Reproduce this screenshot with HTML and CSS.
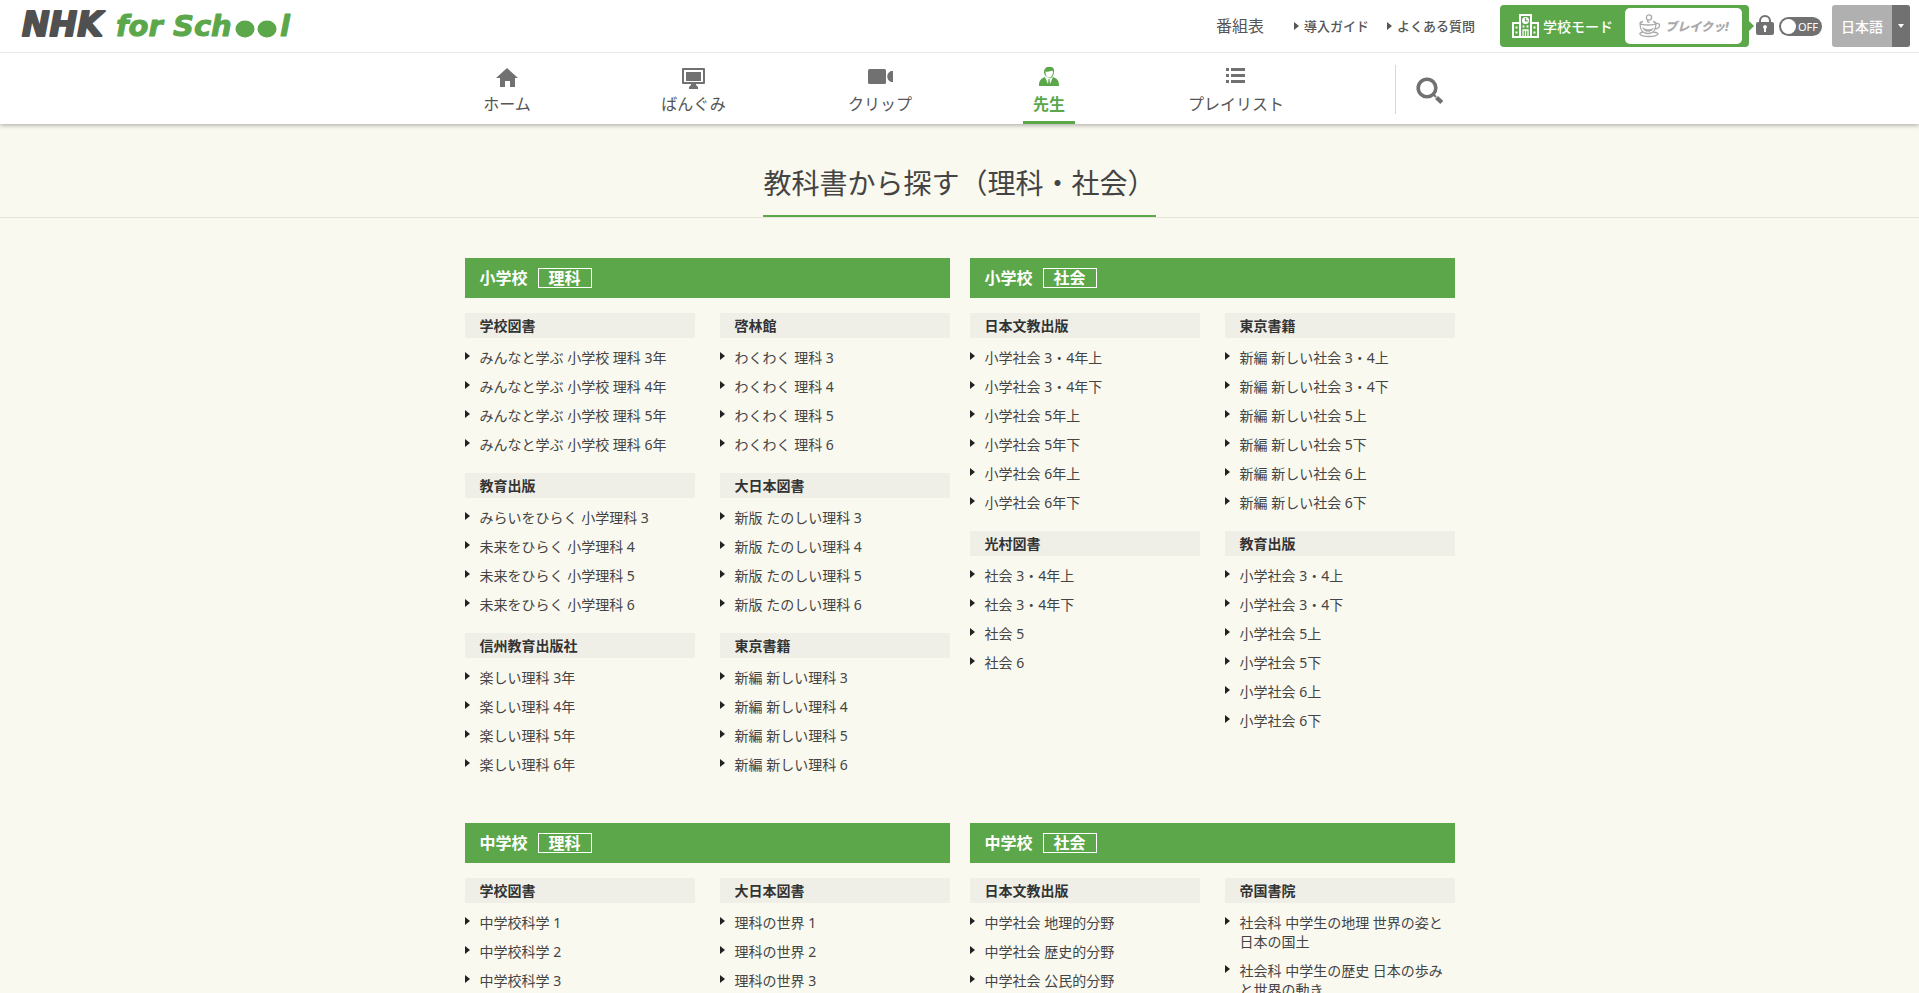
FILE: index.html
```html
<!DOCTYPE html>
<html lang="ja">
<head>
<meta charset="utf-8">
<meta name="viewport" content="width=device-width, initial-scale=1">
<title>教科書から探す（理科・社会） | NHK for School</title>
<link rel="stylesheet" href="styles.css">
</head>
<body>
<header class="header">
  <div class="topbar">
    <a class="logo" href="#" aria-label="NHK for School">
      <svg width="280" height="42" viewBox="0 0 280 42">
        <text class="logo-nhk" x="4" y="31">NHK</text>
        <text class="logo-for" x="98" y="31">for</text>
        <text class="logo-for" x="155" y="31">Sch</text>
        <ellipse class="logo-dot" cx="227" cy="24" rx="9.500" ry="8.500"/>
        <ellipse class="logo-dot" cx="249" cy="24" rx="9.500" ry="8.500"/>
        <text class="logo-for" x="262" y="31">l</text>
      </svg>
    </a>
    <div class="tools">
      <a class="guide" href="#">番組表</a>
      <a class="sublink" href="#">導入ガイド</a>
      <a class="sublink" href="#">よくある質問</a>
      <div class="school">
        <a class="school-mode" href="#">
          <svg width="27" height="24" viewBox="0 0 27 24" fill="none" stroke="#fff" stroke-width="2">
            <path d="M8 23V1h11v22M8 9H1v14h7M19 9h7v14h-7M8 23h11"/>
            <path d="M11 23v-7h5v7M13.500 16v7" stroke-width="1.300"/>
            <circle cx="13.500" cy="6.500" r="3.500" fill="#fff" stroke="none"/>
            <path d="M13.500 4v2.800h2.200" stroke="#5ba74a" stroke-width="1.200"/>
            <path d="M3.500 13.500h2M3.500 18.500h2M21.500 13.500h2M21.500 18.500h2M10.500 12.500h2M14.500 12.500h2"/>
          </svg>
          <span>学校モード</span>
        </a>
        <a class="break" href="#">
          <svg width="23" height="24" viewBox="0 0 23 24" fill="none" stroke="#aaa" stroke-width="1.300">
            <circle cx="11" cy="3.500" r="2.600"/>
            <path d="M10.500 6c-2 1-1 2 1 2.500"/>
            <path d="M5 7.500c-2 .500-3 1.200-3 2 0 6 3 10 8 10s8-4 8-10c0-1-1-1.500-3-2M2 9.500c2 2 14 2 16 0"/>
            <path d="M4 13c1.500 4 4 5.200 8 4.500 2-.500 3-2 4-4-3 2.500-8 2.500-12-.500z" fill="#aaa" stroke="none"/>
            <path d="M18 9.500c5-1 5 5-1.500 5.500M5 18c-3 .500-4 1.500-2.500 2.700 3 2.400 14 2.400 17 0C21 19.500 19 18.500 15 18"/>
          </svg>
          <span>ブレイクッ!</span>
        </a>
      </div>
      <label class="lock">
        <svg width="18" height="22" viewBox="0 0 18 22">
          <path d="M4 9V6a5 5 0 0 1 10 0v3" fill="none" stroke="#717171" stroke-width="2"/>
          <rect y="7" width="18" height="13" rx="2" fill="#717171"/>
          <path d="M9 10a2 2 0 0 1 1 3.700V17H8v-3.300A2 2 0 0 1 9 10z" fill="#fff"/>
        </svg>
        <span class="switch"><input type="checkbox" aria-label="学校モード ロック"><span class="knob"></span><span>OFF</span></span>
      </label>
      <div class="language">
        <select aria-label="言語"><option>日本語</option><option>English</option></select>
        <span class="caret"></span>
      </div>
    </div>
  </div>
  <nav class="nav">
    <ul class="nav-list">
      <li><a href="#">
        <svg width="22" height="22" viewBox="0 0 22 22"><path fill="currentColor" d="M11 1l11 10h-3v9h-5v-6H9v6H4v-9H0z"/></svg>
        <span>ホーム</span></a></li>
      <li><a href="#">
        <svg width="23" height="22" viewBox="0 0 23 22"><path fill="currentColor" fill-rule="evenodd" d="M1 1h21a1 1 0 0 1 1 1v14a1 1 0 0 1-1 1H1a1 1 0 0 1-1-1V2a1 1 0 0 1 1-1zm1 2v12h19V3zM4 5h15v9H4zM9 17h5v1l2 2v2H7v-2l2-2z"/></svg>
        <span>ばんぐみ</span></a></li>
      <li><a href="#">
        <svg width="26" height="22" viewBox="0 0 26 22"><rect x="1" y="2" width="18" height="15" rx="1.500" fill="currentColor"/><path fill="currentColor" d="M26 4v11h-2c-5-2-5-9 0-11z"/></svg>
        <span>クリップ</span></a></li>
      <li><a class="current" href="#" aria-current="page">
        <svg width="20" height="22" viewBox="0 0 20 22"><path fill="currentColor" d="M0 19c0-5 1-7 6-9l3 7 .500-5h1l.500 5 3-7c5 2 6 4 6 9z"/><path fill="currentColor" d="M5 5c0-7 10-7 10-1.500 0 8-4 8.500-6 7C6 9 5 7 5 5z"/><path d="M6.500 4.500c3 .500 5 0 6-1l1.500 1c0 4-2 6-4 6s-3.500-2.500-3.500-6z" fill="#fff"/></svg>
        <span>先生</span></a></li>
      <li><a href="#">
        <svg width="20" height="22" viewBox="0 0 20 22"><path fill="currentColor" d="M0 1h3v3H0zM5 1h14v3H5zM0 7h3v3H0zM5 7h14v3H5zM0 13h3v3H0zM5 13h14v3H5z"/></svg>
        <span>プレイリスト</span></a></li>
    </ul>
    <button class="search" type="button" aria-label="検索">
      <svg width="28" height="28" viewBox="0 0 28 28" fill="none" stroke="#717171"><circle cx="11" cy="11" r="8.800" stroke-width="3.600"/><path d="M18 18l2 2" stroke-width="2"/><path d="M20.500 20.500l5.300 5" stroke-width="4.400"/></svg>
    </button>
  </nav>
</header>
<main>
  <div class="title"><h1>教科書から探す（理科・社会）</h1></div>
  <div class="subjects">
    <section>
      <h2 class="bar">小学校<span>理科</span></h2>
      <div class="columns">
        <div class="column">
          <h3>学校図書</h3>
          <ul><li><a href="#">みんなと学ぶ 小学校 理科 3年</a></li><li><a href="#">みんなと学ぶ 小学校 理科 4年</a></li><li><a href="#">みんなと学ぶ 小学校 理科 5年</a></li><li><a href="#">みんなと学ぶ 小学校 理科 6年</a></li></ul>
          <h3>教育出版</h3>
          <ul><li><a href="#">みらいをひらく 小学理科 3</a></li><li><a href="#">未来をひらく 小学理科 4</a></li><li><a href="#">未来をひらく 小学理科 5</a></li><li><a href="#">未来をひらく 小学理科 6</a></li></ul>
          <h3>信州教育出版社</h3>
          <ul><li><a href="#">楽しい理科 3年</a></li><li><a href="#">楽しい理科 4年</a></li><li><a href="#">楽しい理科 5年</a></li><li><a href="#">楽しい理科 6年</a></li></ul>
        </div>
        <div class="column">
          <h3>啓林館</h3>
          <ul><li><a href="#">わくわく 理科 3</a></li><li><a href="#">わくわく 理科 4</a></li><li><a href="#">わくわく 理科 5</a></li><li><a href="#">わくわく 理科 6</a></li></ul>
          <h3>大日本図書</h3>
          <ul><li><a href="#">新版 たのしい理科 3</a></li><li><a href="#">新版 たのしい理科 4</a></li><li><a href="#">新版 たのしい理科 5</a></li><li><a href="#">新版 たのしい理科 6</a></li></ul>
          <h3>東京書籍</h3>
          <ul><li><a href="#">新編 新しい理科 3</a></li><li><a href="#">新編 新しい理科 4</a></li><li><a href="#">新編 新しい理科 5</a></li><li><a href="#">新編 新しい理科 6</a></li></ul>
        </div>
      </div>
    </section>
    <section>
      <h2 class="bar">小学校<span>社会</span></h2>
      <div class="columns">
        <div class="column">
          <h3>日本文教出版</h3>
          <ul><li><a href="#">小学社会 3・4年上</a></li><li><a href="#">小学社会 3・4年下</a></li><li><a href="#">小学社会 5年上</a></li><li><a href="#">小学社会 5年下</a></li><li><a href="#">小学社会 6年上</a></li><li><a href="#">小学社会 6年下</a></li></ul>
          <h3>光村図書</h3>
          <ul><li><a href="#">社会 3・4年上</a></li><li><a href="#">社会 3・4年下</a></li><li><a href="#">社会 5</a></li><li><a href="#">社会 6</a></li></ul>
        </div>
        <div class="column">
          <h3>東京書籍</h3>
          <ul><li><a href="#">新編 新しい社会 3・4上</a></li><li><a href="#">新編 新しい社会 3・4下</a></li><li><a href="#">新編 新しい社会 5上</a></li><li><a href="#">新編 新しい社会 5下</a></li><li><a href="#">新編 新しい社会 6上</a></li><li><a href="#">新編 新しい社会 6下</a></li></ul>
          <h3>教育出版</h3>
          <ul><li><a href="#">小学社会 3・4上</a></li><li><a href="#">小学社会 3・4下</a></li><li><a href="#">小学社会 5上</a></li><li><a href="#">小学社会 5下</a></li><li><a href="#">小学社会 6上</a></li><li><a href="#">小学社会 6下</a></li></ul>
        </div>
      </div>
    </section>
    <section>
      <h2 class="bar">中学校<span>理科</span></h2>
      <div class="columns">
        <div class="column">
          <h3>学校図書</h3>
          <ul><li><a href="#">中学校科学 1</a></li><li><a href="#">中学校科学 2</a></li><li><a href="#">中学校科学 3</a></li></ul>
        </div>
        <div class="column">
          <h3>大日本図書</h3>
          <ul><li><a href="#">理科の世界 1</a></li><li><a href="#">理科の世界 2</a></li><li><a href="#">理科の世界 3</a></li></ul>
        </div>
      </div>
    </section>
    <section>
      <h2 class="bar">中学校<span>社会</span></h2>
      <div class="columns">
        <div class="column">
          <h3>日本文教出版</h3>
          <ul><li><a href="#">中学社会 地理的分野</a></li><li><a href="#">中学社会 歴史的分野</a></li><li><a href="#">中学社会 公民的分野</a></li></ul>
        </div>
        <div class="column">
          <h3>帝国書院</h3>
          <ul><li><a href="#">社会科 中学生の地理 世界の姿と日本の国土</a></li><li><a href="#">社会科 中学生の歴史 日本の歩みと世界の動き</a></li></ul>
        </div>
      </div>
    </section>
  </div>
</main>
</body>
</html>
```

FILE: styles.css
```css
* { box-sizing: border-box; }
body {
  margin: 0;
  background: #f9f9f0;
  color: #444;
  font-family: "Noto Sans", "Noto Sans CJK JP", sans-serif;
  font-size: 14px;
  line-height: 19px;
}
a { color: inherit; text-decoration: none; }
ul { list-style: none; margin: 0; padding: 0; }
h1, h2, h3 { margin: 0; }
svg { display: block; flex: none; }

.header {
  position: relative;
  background: #fff;
  box-shadow: 0 1px 5px rgba(0, 0, 0, .35);
}
.topbar {
  display: flex;
  justify-content: space-between;
  align-items: flex-start;
  height: 53px;
  padding: 5px 9px 0 18px;
  border-bottom: 1px solid #e8e8e8;
}
.logo svg { overflow: visible; }
.logo text {
  font-family: "DejaVu Sans", sans-serif;
  font-style: italic;
  font-weight: 700;
  stroke-width: 2px;
  stroke-linejoin: round;
}
.logo .logo-nhk { font-size: 33px; fill: #505050; stroke: #505050; }
.logo .logo-for { font-size: 29px; fill: #5ba74a; stroke: #5ba74a; stroke-width: 1px; }
.logo-dot { fill: #5ba74a; }

.tools { display: flex; align-items: center; height: 42px; color: #555; }
.guide { margin-right: 30px; font-size: 16px; }
.sublink {
  display: flex;
  align-items: center;
  gap: 5px;
  margin-right: 18px;
  font-size: 13px;
  font-weight: 500;
}
.sublink::before {
  content: "";
  border: 4px solid transparent;
  border-left: 5px solid #555;
  border-right: 0;
}
.school {
  position: relative;
  display: flex;
  align-items: center;
  height: 42px;
  margin-left: 7px;
  padding: 0 7px 0 12px;
  border-radius: 4px;
  background: #5ba74a;
}
.school::after {
  content: "";
  position: absolute;
  left: 100%;
  border: 5px solid transparent;
  border-left-color: #5ba74a;
  border-right: 0;
}
.school-mode {
  display: flex;
  align-items: center;
  gap: 4px;
  margin-right: 12px;
  color: #fff;
  font-weight: 500;
}
.break {
  display: flex;
  align-items: center;
  justify-content: center;
  gap: 4px;
  width: 117px;
  height: 36px;
  border-radius: 5px;
  background: #fff;
  color: #aaa;
  font-size: 12px;
  font-weight: 900;
  font-style: italic;
}
.lock { display: flex; align-items: center; gap: 5px; margin: 0 10px 0 7px; }
.switch {
  display: flex;
  align-items: center;
  gap: 2px;
  width: 43px;
  height: 19px;
  padding-left: 2px;
  border-radius: 10px;
  background: #717171;
  color: #fff;
  font-size: 11px;
}
.switch input { position: absolute; opacity: 0; margin: 0; }
.knob { width: 15px; height: 15px; border-radius: 50%; background: #fff; }
.language {
  display: flex;
  width: 78px;
  height: 42px;
  border-radius: 3px;
  overflow: hidden;
  background: #b0b0b0;
}
.language select {
  appearance: none;
  flex: 1;
  min-width: 0;
  padding: 0 0 0 9px;
  border: 0;
  background: transparent;
  color: #fff;
  font: inherit;
  font-weight: 500;
}
.caret {
  display: flex;
  align-items: center;
  justify-content: center;
  width: 18px;
  background: #717171;
}
.caret::before {
  content: "";
  border: 3px solid transparent;
  border-top: 4px solid #fff;
  border-bottom: 0;
}

.nav {
  display: flex;
  align-items: flex-start;
  max-width: 1090px;
  height: 71px;
  margin: 0 auto;
}
.nav-list {
  display: grid;
  grid-template-columns: 185fr 188fr 185fr 153fr 221fr;
  flex: 0 1 932px;
  height: 100%;
  color: #555;
}
.nav-list li { display: flex; justify-content: center; }
.nav-list a {
  display: flex;
  flex-direction: column;
  align-items: center;
  gap: 5px;
  padding: 14px 10px 0;
  font-size: 16px;
  line-height: 20px;
  white-space: nowrap;
}
.nav-list svg { color: #717171; }
.nav-list .current { border-bottom: 3px solid #5ba74a; color: #5ba74a; font-weight: 700; }
.nav-list .current svg { color: inherit; }
.search {
  height: 49px;
  margin: 12px 0 0 48px;
  padding: 2px 20px 0;
  border: 0;
  border-left: 1px solid #d8d8d8;
  background: none;
  cursor: pointer;
}

.title {
  display: flex;
  justify-content: center;
  padding-top: 37px;
  border-bottom: 1px solid #e5e5d8;
}
.title h1 {
  padding-bottom: 10px;
  border-bottom: 2px solid #5ba74a;
  font-size: 28px;
  font-weight: 400;
  line-height: 44px;
}
.subjects {
  display: grid;
  grid-template-columns: 1fr 1fr;
  gap: 30px 20px;
  max-width: 990px;
  margin: 40px auto 0;
}
.bar {
  display: flex;
  align-items: center;
  gap: 10px;
  height: 40px;
  padding-left: 15px;
  background: #5ba74a;
  color: #fff;
  font-size: 16px;
}
.bar span { padding: 0 10px; border: 1px solid #fff; line-height: 18px; }
.columns {
  display: grid;
  grid-template-columns: 1fr 1fr;
  gap: 25px;
  margin-top: 15px;
}
.column h3 {
  padding-left: 15px;
  background: #efefe8;
  color: #333;
  font-size: 14px;
  line-height: 25px;
}
.column ul { margin-bottom: 19px; }
.column li { display: flex; align-items: flex-start; padding-top: 10px; }
.column li::before {
  content: "";
  flex: none;
  margin: 4px 10px 0 0;
  border: 4px solid transparent;
  border-left: 5px solid #222;
  border-right: 0;
}
```
